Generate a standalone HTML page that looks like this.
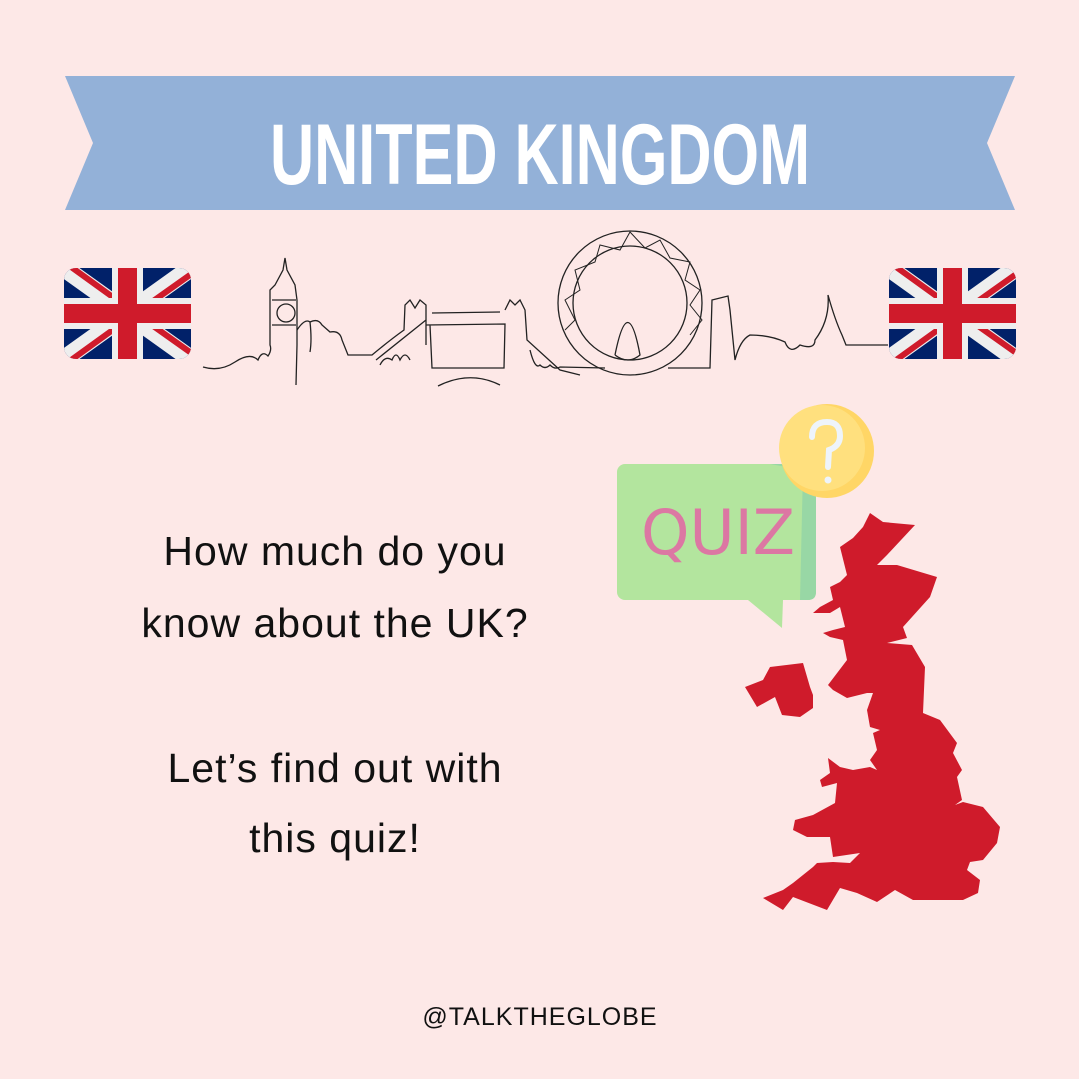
<!DOCTYPE html>
<html><head><meta charset="utf-8"><style>
html,body{margin:0;padding:0}
body{width:1079px;height:1079px;background:#fde8e7;position:relative;overflow:hidden;font-family:"Liberation Sans",sans-serif}
.t{position:absolute;left:60px;width:550px;text-align:center;font-size:41px;color:#111;letter-spacing:1px}
</style></head><body>
<svg width="1079" height="1079" style="position:absolute;left:0;top:0">
<polygon points="65,76 1015,76 987,143 1015,210 65,210 93,143" fill="#93b1d8"/>
<text x="540" y="184" text-anchor="middle" textLength="540" lengthAdjust="spacingAndGlyphs" font-family="Liberation Sans" font-weight="bold" font-size="86" fill="#fff">UNITED KINGDOM</text>
<defs>
<clipPath id="fc"><rect x="0" y="0" width="127" height="91" rx="12"/></clipPath>
<g id="flag" clip-path="url(#fc)">
<rect width="127" height="91" fill="#012169"/>
<path d="M0,0L127,91M127,0L0,91" stroke="#eee" stroke-width="18"/>
<path d="M0,0L63,45.5M127,91L63,45.5" stroke="#cf1b2b" stroke-width="6" transform="translate(3,-4)"/>
<path d="M127,0L63,45.5M0,91L63,45.5" stroke="#cf1b2b" stroke-width="6" transform="translate(3,4)"/>
<rect x="0" y="30" width="127" height="31" fill="#eee"/>
<rect x="48" y="0" width="31" height="91" fill="#eee"/>
<rect x="0" y="36" width="127" height="19" fill="#cf1b2b"/>
<rect x="54" y="0" width="19" height="91" fill="#cf1b2b"/>
</g></defs>
<use href="#flag" x="64" y="268"/>
<use href="#flag" x="889" y="268"/>
<g fill="none" stroke="#222" stroke-width="1.3">
<path d="M203,367 Q220,372 235,362 Q250,352 258,360 Q262,350 268,356 Q272,350 270,345 L270,300 L270,290 L275,285 L283,270 L285,258 L287,270 L295,285 L297,300 L297,345 L296,385 M272,300 L296,300 M272,325 L296,325"/>
<circle cx="286" cy="313" r="9"/>
<path d="M297,330 Q305,318 310,322 Q312,340 310,352 M310,322 Q318,318 322,325 L330,332 Q340,330 342,340 L348,355 L372,355 Q390,340 404,330 L405,305 L410,300 L415,308 L420,300 L426,305 L426,345 M376,360 L426,320 M380,365 Q385,355 392,360 Q396,350 400,360 Q405,350 410,360 M432,313 L500,312 M426,325 L505,324 L504,368 L432,368 L430,325 M438,386 Q470,370 500,385 M505,310 L510,300 L515,305 L520,300 L525,310 L527,340 L560,370 L580,375 M530,350 Q535,370 540,365 Q545,370 550,365 Q555,370 560,367 L605,368"/>
<circle cx="630" cy="303" r="72"/>
<circle cx="630" cy="303" r="57"/>
<path d="M615,355 Q628,290 640,355 Q628,365 615,355 M668,368 L710,368 L712,300 L728,296 L730,310 L735,360 Q740,340 750,335 Q770,335 785,342 Q790,355 800,345 Q815,350 815,340 Q830,320 828,295 Q835,320 842,335 L846,345 L888,345"/>
<path d="M565,330 L575,320 L565,300 L580,290 L575,270 L595,262 L600,245 L620,250 L630,232 L645,248 L660,240 L670,258 L690,262 L685,280 L700,290 L690,305 L702,320 L690,335" stroke-width="1"/>
</g>
<rect x="617" y="464" width="199" height="136" rx="8" fill="#b3e59e"/>
<path d="M770,464 L808,464 Q816,464 816,472 L816,592 Q816,600 808,600 L800,600 L803,470 Z" fill="#98d7a5"/>
<polygon points="748,600 783,600 782,628" fill="#b3e59e"/>
<circle cx="827" cy="451" r="47" fill="#ffd666"/>
<circle cx="822" cy="448" r="43" fill="#ffe07e"/>
<path d="M812,437 Q812,422 827,422 Q840,422 840,436 Q840,446 829,450 L828,467" fill="none" stroke="#eef4fb" stroke-width="6" stroke-linecap="round"/>
<circle cx="828" cy="480" r="3.5" fill="#eef4fb"/>
<text x="718" y="554" text-anchor="middle" textLength="154" lengthAdjust="spacingAndGlyphs" font-family="DejaVu Sans" font-size="62" fill="#dc77a3">QUIZ</text>
<polygon fill="#cf1b2b" points="870,513 883,522 915,525 887,555 877,565 897,565 937,577 930,597 903,627 907,638 887,643 912,645 925,667 923,713 940,720 957,743 953,753 962,770 957,777 962,800 955,805 963,802 983,807 1000,827 997,843 983,860 970,862 967,870 980,880 978,893 963,900 933,900 913,900 895,890 877,902 857,893 840,888 827,910 793,897 783,910 763,898 783,890 793,883 813,867 817,863 833,862 850,863 860,853 833,857 830,837 807,837 793,830 795,820 813,815 835,803 837,783 822,787 820,780 830,773 828,758 840,767 853,770 870,767 877,770 870,760 877,750 873,733 880,730 870,727 867,710 873,693 867,693 847,698 833,690 828,685 847,660 843,640 830,637 823,633 833,630 845,627 840,607 830,613 813,613 820,607 833,600 830,587 840,582 847,575 840,547 853,538 863,527"/>
<polygon fill="#cf1b2b" points="745,687 763,680 770,667 803,663 810,687 813,695 813,708 800,717 782,715 775,697 757,707"/>
</svg>
<div class="t" style="top:528px">How much do you</div>
<div class="t" style="top:600px">know about the UK?</div>
<div class="t" style="top:745px">Let’s find out with</div>
<div class="t" style="top:815px">this quiz!</div>
<div style="position:absolute;left:340px;width:400px;top:1003px;text-align:center;font-size:25px;letter-spacing:1px;color:#111">@TALKTHEGLOBE</div>
</body></html>
